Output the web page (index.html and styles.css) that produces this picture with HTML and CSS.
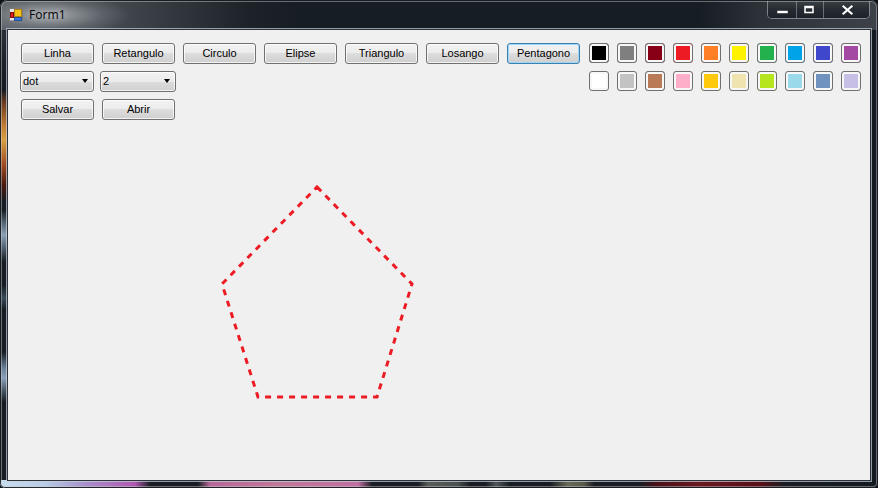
FILE: index.html
```html
<!DOCTYPE html>
<html>
<head>
<meta charset="utf-8">
<title>Form1</title>
<link rel="stylesheet" href="styles.css">
</head>
<body>
<div class="window">
  <div class="titlebar">
    <div class="title">
      <svg class="app-icon" width="14" height="14" viewBox="0 0 14 14">
        <rect x="0.5" y="0.5" width="13" height="13" fill="#e8e8e8" stroke="#7a7a7a"/>
        <rect x="1" y="12" width="12" height="1" fill="#9a9a9a"/>
        <rect x="1.5" y="4.5" width="3" height="5" fill="#e02020" stroke="#801010"/>
        <rect x="5.5" y="1.5" width="7" height="7" fill="#f6c21a" stroke="#b08010"/>
        <rect x="5.5" y="9.5" width="7" height="3" fill="#3a78e0" stroke="#2050a0"/>
      </svg>
      <span class="title-text">Form1</span>
    </div>
    <div class="caption-btns">
      <div class="cb cb-min">
        <svg width="28" height="18" viewBox="0 0 28 18"><rect x="9" y="10.5" width="11" height="3" fill="#fff" stroke="#2a3036" stroke-width="0.6"/></svg>
      </div>
      <div class="cb cb-max">
        <svg width="26" height="18" viewBox="0 0 26 18"><path d="M7 5.5h10v8H7z M9 8.5v3h6v-3z" fill="#fff" fill-rule="evenodd" stroke="#2a3036" stroke-width="0.5"/></svg>
      </div>
      <div class="cb cb-close">
        <svg width="45" height="18" viewBox="0 0 45 18"><path d="M19.5 6.5l8 7M27.5 6.5l-8 7" stroke="#fff" stroke-width="2.2" stroke-linecap="square"/></svg>
      </div>
    </div>
  </div>
  <div class="middle">
    <div class="frame-left"></div>
    <div class="client">
      <svg class="canvas" width="862" height="450" viewBox="0 0 862 450">
        <polygon points="309,157 404,254 369,367 250,367 214,254" fill="none" stroke="#ed1c24" stroke-width="3" stroke-dasharray="6 6"/>
      </svg>
      <div class="controls">
        <div class="left-col">
          <div class="row">
            <button class="btn">Linha</button>
            <button class="btn">Retangulo</button>
            <button class="btn">Circulo</button>
            <button class="btn">Elipse</button>
            <button class="btn">Triangulo</button>
            <button class="btn">Losango</button>
            <button class="btn btn-default">Pentagono</button>
          </div>
          <div class="row row-combos">
            <div class="combo combo-a"><span>dot</span><i class="arrow"></i></div>
            <div class="combo combo-b"><span>2</span><i class="arrow"></i></div>
          </div>
          <div class="row">
            <button class="btn">Salvar</button>
            <button class="btn">Abrir</button>
          </div>
        </div>
        <div class="palette">
          <div class="sw" style="background-color:#000000"></div>
          <div class="sw" style="background-color:#7f7f7f"></div>
          <div class="sw" style="background-color:#880015"></div>
          <div class="sw" style="background-color:#ed1c24"></div>
          <div class="sw" style="background-color:#ff7f27"></div>
          <div class="sw" style="background-color:#fff200"></div>
          <div class="sw" style="background-color:#22b14c"></div>
          <div class="sw" style="background-color:#00a2e8"></div>
          <div class="sw" style="background-color:#3f48cc"></div>
          <div class="sw" style="background-color:#a349a4"></div>
          <div class="sw" style="background-color:#ffffff"></div>
          <div class="sw" style="background-color:#c3c3c3"></div>
          <div class="sw" style="background-color:#b97a57"></div>
          <div class="sw" style="background-color:#ffaec9"></div>
          <div class="sw" style="background-color:#ffc90e"></div>
          <div class="sw" style="background-color:#efe4b0"></div>
          <div class="sw" style="background-color:#b5e61d"></div>
          <div class="sw" style="background-color:#99d9ea"></div>
          <div class="sw" style="background-color:#7092be"></div>
          <div class="sw" style="background-color:#c8bfe7"></div>
        </div>
      </div>
    </div>
    <div class="frame-right"></div>
  </div>
  <div class="frame-bottom"></div>
</div>
</body>
</html>
```
FILE: styles.css
```css
html, body {
  margin: 0;
  padding: 0;
  background: #0e1216;
}

.window {
  position: relative;
  width: 878px;
  height: 488px;
  display: flex;
  flex-direction: column;
  background: #161c22;
  border-radius: 7px 7px 5px 5px;
  overflow: hidden;
  font-family: "Liberation Sans", Arial, sans-serif;
}

.window::after {
  content: "";
  position: absolute;
  inset: 0;
  border-radius: 7px 7px 5px 5px;
  box-shadow: inset 0 0 0 1px rgba(10, 12, 14, 0.85), inset 0 0 0 2px rgba(200, 208, 216, 0.45);
  pointer-events: none;
}

/* ---------- title bar ---------- */
.titlebar {
  height: 30px;
  flex: none;
  display: flex;
  align-items: flex-start;
  background:
    radial-gradient(ellipse 80px 20px at 50px 15px, rgba(225, 228, 232, 0.6), rgba(160, 165, 170, 0.25) 65%, rgba(150, 155, 160, 0) 100%),
    linear-gradient(90deg, #5a6066 0, #474d53 100px, #30363c 180px, #1c2228 250px, #171d24 300px, #171d24 700px, #2c3238 760px, #3c4248 878px);
}

.title {
  display: flex;
  align-items: flex-start;
  padding: 8px 0 0 9px;
}

.app-icon {
  display: block;
}

.title-text {
  margin-left: 6px;
  font-family: "Noto Sans", "Open Sans", sans-serif;
  font-size: 12px;
  line-height: 14px;
  color: #0c0c0c;
  text-shadow: 0 0 6px rgba(255, 255, 255, 0.5);
}

.caption-btns {
  margin-left: auto;
  margin-right: 8px;
  display: flex;
  height: 19px;
  box-sizing: border-box;
  border: 1px solid rgba(190, 198, 205, 0.55);
  border-top: none;
  border-radius: 0 0 5px 5px;
  overflow: hidden;
}

.cb {
  height: 18px;
  background: linear-gradient(#3b4248, #262c32 50%, #1c2228);
}

.cb svg {
  display: block;
}

.cb-min {
  width: 28px;
  border-right: 1px solid rgba(190, 198, 205, 0.45);
}

.cb-max {
  width: 26px;
  border-right: 1px solid rgba(190, 198, 205, 0.45);
}

.cb-close {
  width: 45px;
}

/* ---------- frame ---------- */
.middle {
  flex: none;
  height: 450px;
  display: flex;
}

.frame-left {
  width: 8px;
  flex: none;
  background: linear-gradient(180deg,
    #2a3036 0, #1c2228 30px, #161c22 60px, #6a3a20 72px, #c07a30 95px, #d8a040 110px, #a04a20 135px,
    #4a1a10 155px, #161c22 172px, #161c22 180px, #50606e 192px, #8aa0b4 205px, #50606e 218px,
    #161c22 232px, #161c22 255px, #3a4a58 268px, #161c22 280px, #161c22 322px,
    #6a8098 338px, #8aa0b8 348px, #4a5a68 360px, #161c22 372px, #161c22 450px);
}

.frame-right {
  width: 8px;
  flex: none;
  background: #161b21;
}

.frame-bottom {
  height: 8px;
  flex: none;
  background: linear-gradient(90deg,
    #c8dcef 0, #b8cce6 45px, #a890cc 85px, #b058b0 135px, #1a1e24 150px, #1a1e24 198px,
    #b86898 210px, #c07898 280px, #c070a0 358px, #1a1e24 372px, #1a1e24 418px,
    #5a5e58 428px, #4a5050 458px, #1a1e24 470px, #1a1e24 486px, #50585a 496px, #1a1e24 510px,
    #1a1e24 550px, #6a6a58 568px, #5a5a4c 584px, #1a1e24 594px, #1a1e24 640px,
    #4a1018 656px, #6a1820 700px, #5a1018 760px, #1a1e24 785px, #151a20 878px);
}

/* ---------- client area ---------- */
.client {
  position: relative;
  width: 862px;
  height: 450px;
  flex: none;
  box-sizing: border-box;
  padding: 13px 0 0 13px;
  background: #f0f0f0;
  box-shadow: 0 0 0 1px #2c3238, 0 0 0 2px rgba(200, 210, 222, 0.7);
  z-index: 1;
}

.canvas {
  position: absolute;
  left: 0;
  top: 0;
}

.controls {
  position: relative;
  display: flex;
  align-items: flex-start;
}

.left-col {
  display: flex;
  flex-direction: column;
  gap: 7px;
}

.row {
  display: flex;
  gap: 8px;
}

.btn {
  width: 73px;
  height: 21px;
  box-sizing: border-box;
  margin: 0;
  padding: 0 0 1px 0;
  border: 1px solid #707070;
  border-radius: 3px;
  background: linear-gradient(180deg, #f2f2f2 0%, #ebebeb 50%, #dddddd 50%, #cfcfcf 100%);
  box-shadow: inset 0 0 0 1px rgba(255, 255, 255, 0.75);
  font-family: "Liberation Sans", Arial, sans-serif;
  font-size: 11px;
  color: #000;
  display: flex;
  align-items: center;
  justify-content: center;
}

.btn-default {
  border-color: #3c7fb1;
  box-shadow: inset 0 0 0 1px #9fd8f5;
}

.row-combos {
  gap: 6px;
  margin-left: -1px;
}

.combo {
  height: 21px;
  box-sizing: border-box;
  border: 1px solid #707070;
  border-radius: 3px;
  background: linear-gradient(180deg, #f2f2f2 0%, #ebebeb 50%, #dddddd 50%, #cfcfcf 100%);
  box-shadow: inset 0 0 0 1px rgba(255, 255, 255, 0.75);
  display: flex;
  align-items: center;
  padding: 0 4px 1px 2px;
  font-size: 11px;
  color: #000;
}

.combo-a {
  width: 74px;
}

.combo-b {
  width: 76px;
}

.combo span {
  flex: 1;
}

.arrow {
  width: 0;
  height: 0;
  border-left: 3.5px solid transparent;
  border-right: 3.5px solid transparent;
  border-top: 4px solid #000;
  margin-right: 1px;
}

.palette {
  margin-left: 9px;
  display: grid;
  grid-template-columns: repeat(10, 20px);
  grid-auto-rows: 20px;
  column-gap: 8px;
  row-gap: 8px;
}

.sw {
  box-sizing: border-box;
  border: 1px solid #707070;
  border-radius: 3px;
  box-shadow: inset 0 0 0 2px #f7f7f7;
}
```
